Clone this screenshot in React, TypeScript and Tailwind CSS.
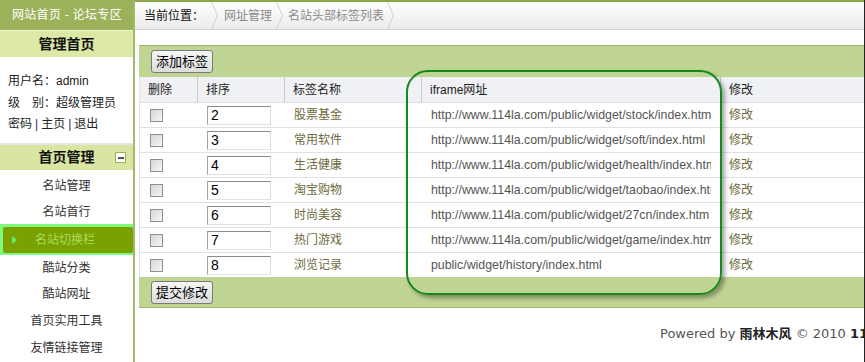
import React from 'react';

const rows = [
    { order: '2', name: '股票基金', url: 'http://www.114la.com/public/widget/stock/index.htm' },
    { order: '3', name: '常用软件', url: 'http://www.114la.com/public/widget/soft/index.html' },
    { order: '4', name: '生活健康', url: 'http://www.114la.com/public/widget/health/index.htm' },
    { order: '5', name: '淘宝购物', url: 'http://www.114la.com/public/widget/taobao/index.htm' },
    { order: '6', name: '时尚美容', url: 'http://www.114la.com/public/widget/27cn/index.htm' },
    { order: '7', name: '热门游戏', url: 'http://www.114la.com/public/widget/game/index.htm' },
    { order: '8', name: '浏览记录', url: 'public/widget/history/index.html' },
];

function Chevron() {
    return (
        <svg width="7" height="27" viewBox="0 0 7 27" className="shrink-0">
            <polyline points="0.5,0 6.5,13.5 0.5,27" fill="none" stroke="#cfcfcf" strokeWidth="1" />
        </svg>
    );
}

function Checkbox() {
    return <span className="block w-[13px] h-[13px] border border-[#8e8e8e] bg-gradient-to-br from-[#d6d6d6] to-[#f7f7f7]" />;
}

function Button({ label }: { label: string }) {
    return (
        <button className="h-[23px] px-[4px] border border-[#7a7a7a] rounded-[3px] bg-gradient-to-b from-[#f6f6f6] to-[#dcdcdc] text-[13px] leading-[19px] text-black">
            {label}
        </button>
    );
}

function Sidebar() {
    const item = 'flex items-center justify-center text-[12px] text-[#333]';
    return (
        <div className="w-[135px] shrink-0 border-r-2 border-[#a2b86a] flex flex-col">
            <div className="h-[30px] bg-[#9cb25a] text-white text-[12px] leading-[30px] pl-[12px] whitespace-nowrap tracking-[0.3px]">网站首页 - 论坛专区</div>
            <div className="h-[27px] border-t border-[#eef4d4] bg-[#dbe8a6] text-[14px] font-bold text-[#111] flex items-center justify-center">管理首页</div>
            <div className="pt-[14px] pl-[8px] text-[12px] leading-[21.5px] text-[#222] h-[86px]">
                <div>用户名：admin</div>
                <div>级　别：超级管理员</div>
                <div className="flex items-center">
                    <span>密码</span><span className="mx-[3px] text-[#3a1a5a]">|</span>
                    <span>主页</span><span className="mx-[3px] text-[#3a1a5a]">|</span>
                    <span>退出</span>
                </div>
            </div>
            <div className="h-[27px] border-t-2 border-[#e4e4e4] bg-[#d8e6a2] relative flex items-center justify-center text-[14px] font-bold text-[#111]">
                首页管理
                <span className="absolute left-[115px] top-[7px] w-[11px] h-[11px] bg-white border border-[#9cb25a] flex items-center justify-center">
                    <span className="block w-[6px] h-[2px] bg-[#555]" />
                </span>
            </div>
            <div className="h-[2px]" />
            <div className={`${item} h-[27px]`}>名站管理</div>
            <div className={`${item} h-[25px]`}>名站首行</div>
            <div className="h-[31px] bg-[#80f97c] pl-[3px] pt-[3px] pb-[2px]">
                <div className="h-full bg-[#79a100] rounded-[2px] flex items-center relative">
                    <span className="absolute left-[9px] top-[9px] w-0 h-0 border-y-[4px] border-y-transparent border-l-[5px] border-l-[#66ee66]" />
                    <span className="pl-[32px] text-[12px] text-[#a9dd5c]">名站切换栏</span>
                </div>
            </div>
            <div className={`${item} h-[25px]`}>酷站分类</div>
            <div className={`${item} h-[27px]`}>酷站网址</div>
            <div className={`${item} h-[27px]`}>首页实用工具</div>
            <div className={`${item} h-[27px]`}>友情链接管理</div>
        </div>
    );
}

export default function App() {
    const cols = ['w-[58px]', 'w-[87px]', 'w-[137px]', 'w-[299px]', 'flex-1'];
    return (
        <div className="relative w-[865px] h-[362px] overflow-hidden flex bg-white border-r border-[#222] font-['Liberation_Sans','Noto_Sans_CJK_SC',sans-serif]">
            <Sidebar />
            <div className="flex-1 min-w-0 flex flex-col border-t-2 border-[#8da646]">
                <div className="h-[28px] bg-gradient-to-b from-white to-[#ebebeb] border-b border-[#d2d2d2] flex items-center pl-[9px] text-[12px] whitespace-nowrap">
                    <span className="text-[#111]">当前位置：</span>
                    <span className="ml-[7px]"><Chevron /></span>
                    <span className="ml-[6px] text-[#8a8a8a]">网址管理</span>
                    <span className="ml-[4px]"><Chevron /></span>
                    <span className="ml-[5px] text-[#8a8a8a]">名站头部标签列表</span>
                    <span className="ml-[3px]"><Chevron /></span>
                </div>
                <div className="pl-[4px] pt-[15px]">
                    <div className="h-[32px] bg-[#c0d494] border-t border-[#a0b96c] flex items-center pl-[12px]">
                        <Button label="添加标签" />
                    </div>
                    <div className="flex h-[25px] bg-[#f0f1f4] text-[12px] text-[#222] border-l border-[#e4e4e4]">
                        {['删除', '排序', '标签名称', 'iframe网址', '修改'].map((h, i) => (
                            <div key={h} className={`${cols[i]} flex items-center pl-[8px] ${i < 4 ? 'border-r border-[#c9c9c9]' : ''}`}>{h}</div>
                        ))}
                    </div>
                    {rows.map((r) => (
                        <div key={r.order} className="flex h-[25px] border-t border-[#e1e1e1] border-l text-[12px] whitespace-nowrap">
                            <div className={`${cols[0]} flex items-center pl-[10px]`}><Checkbox /></div>
                            <div className={`${cols[1]} flex items-center pl-[9px]`}>
                                <div className="w-[64px] h-[19px] border border-t-[#8a8a8a] border-l-[#a3a3a3] border-r-[#dadada] border-b-[#e2e2e2] text-[14px] leading-[17px] pl-[3px] text-black">{r.order}</div>
                            </div>
                            <div className={`${cols[2]} flex items-center pl-[9px] text-[#6e6a3c]`}>{r.name}</div>
                            <div className={`${cols[3]} flex items-center pl-[9px] pr-[10px] overflow-hidden text-[#555]`}>
                                <span className="overflow-hidden text-[12.35px]">{r.url}</span>
                            </div>
                            <div className={`${cols[4]} flex items-center pl-[8px] text-[#6e6a3c]`}>修改</div>
                        </div>
                    ))}
                    <div className="h-[31px] bg-[#c0d494] border-b border-[#a0b96c] flex items-center pl-[12px]">
                        <Button label="提交修改" />
                    </div>
                </div>
                <div className="mt-[18px] pl-[525px] whitespace-nowrap text-[13px] leading-[16px] text-[#555] font-['DejaVu_Sans','Noto_Sans_CJK_SC',sans-serif]">
                    Powered by <b className="text-[#222] text-[13px]">雨林木风</b> © 2010 <b className="text-[#222]">114</b>
                </div>
            </div>
            <div className="absolute left-[406px] top-[70px] w-[316px] h-[225px] border-2 border-[#14881a] rounded-[22px] shadow-[3px_3px_4px_rgba(0,0,0,0.35)] pointer-events-none" />
        </div>
    );
}
